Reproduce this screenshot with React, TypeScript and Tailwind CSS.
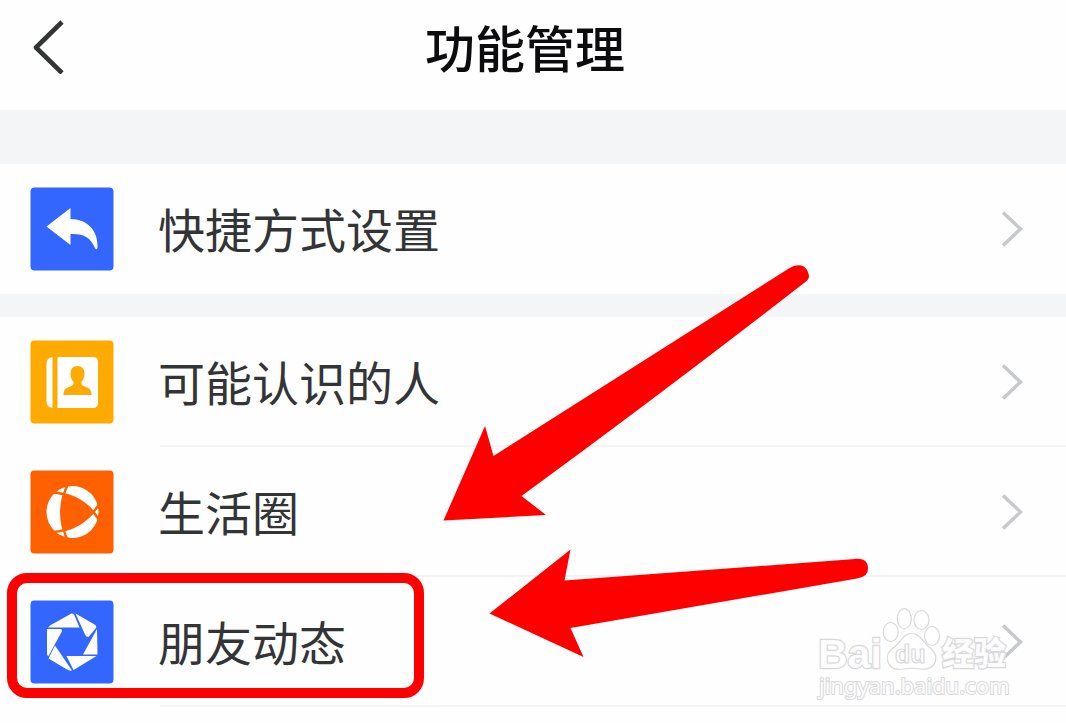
import type { ReactNode } from "react";

function BackIcon() {
  return (
    <svg width="34" height="54" viewBox="0 0 34 54" fill="none" aria-hidden="true">
      <path d="M30 2 L4 27.500 L30 53" stroke="#333436" strokeWidth="4.600" strokeLinejoin="round" />
    </svg>
  );
}

function Chevron() {
  return (
    <svg className="shrink-0" width="24" height="38" viewBox="0 0 24 38" fill="none" aria-hidden="true">
      <path d="M3 2.500 L20.500 19 L3 35.500" stroke="#c7c8cc" strokeWidth="3.400" />
    </svg>
  );
}

function Tile({ fill, children }: { fill: string; children: ReactNode }) {
  return (
    <svg className="shrink-0" width="84" height="84" viewBox="0 0 84 84" aria-hidden="true">
      <rect x="0.500" y="0.500" width="83" height="83" rx="4" fill={fill} />
      {children}
    </svg>
  );
}

const shortcutIcon = (
  <Tile fill="#3366ff">
    <path d="M16.500 39.500 L40.500 21 V32 C57 32 68 43 67.500 60 Q67 64 65 61 C60 50 54 46.500 40.500 47 V58 Z" fill="#fff" />
  </Tile>
);

const contactsIcon = (
  <Tile fill="#ffaa00">
    <path d="M22.500 17 V68 C18 67 16.500 65 16.500 61 V24 C16.500 20 18 18 22.500 17 Z" fill="#fff" />
    <path d="M27.500 17 H63 Q68 17 68 22 V63 Q68 68 63 68 H27.500 Z" fill="#fff" />
    <path d="M47.500 26 C52 26 54.500 29 54.500 33.500 C54.500 37 53.500 39.500 51.500 42 C51 45 53 46 56 47 C60 48.500 61.500 50 61.500 55 H33.500 C33.500 50 35 48.500 39 47 C42 46 44 45 43.500 42 C41.500 39.500 40.500 37 40.500 33.500 C40.500 29 43 26 47.500 26 Z" fill="#ffaa00" />
  </Tile>
);

const lifeIcon = (
  <Tile fill="#ff6000">
    <circle cx="42.500" cy="42" r="26" fill="#fff" />
    <path d="M34 24 C29.500 36 29.500 49 34 61 C46 58 56 52 62.500 42 C56 33 46 27 34 24 Z" fill="#ff6000" />
    <path d="M38 14 C29 32 29 53 38 71 M22 22.500 C41 23.500 58 32 70 51 M70 33 C58 52 41 61 22 62" fill="none" stroke="#ff6000" strokeWidth="2.400" />
  </Tile>
);

const momentsIcon = (
  <Tile fill="#3366ff">
    <g fill="#fff">
      <path d="M41.500 13.500 Q43.500 13 44.500 15.500 L49.500 27.500 H18 L20 25.500 Z" />
      <path d="M45.500 13.500 L64.500 24.500 Q67 26 66 28 L58.500 37 Q56 37 55 34.500 Z" />
      <path d="M67 29 L67.500 54.500 H53 Z" />
      <path d="M66.500 56 L43.500 70 L36.500 56 Z" />
      <path d="M25 45.500 L42 70.500 Q39 71 37 69.500 L18.500 58.500 Z" />
      <path d="M17 29 H31 Q33 30 31 33 L18.500 56 Q17 56 17 53 Z" />
    </g>
  </Tile>
);

function Row({ icon, label, divider }: { icon: ReactNode; label: string; divider?: boolean }) {
  return (
    <li className="relative">
      <a href="#" className="flex h-[130px] items-center pl-[30px] pr-[42px] text-[#333436]">
        {icon}
        <span className="ml-11 flex-1 pb-0.5 text-[47px] leading-[60px]">{label}</span>
        <Chevron />
      </a>
      {divider && <span className="absolute bottom-0 left-40 right-0 h-0.5 bg-[#f4f4f7]" />}
    </li>
  );
}

function Watermark() {
  return (
    <svg className="pointer-events-none absolute left-[812px] top-[600px]" width="204" height="104" viewBox="0 0 204 104" aria-label="Baidu 经验">
      <g fill="#fff" fillOpacity="0.9" stroke="#d9d9db" strokeWidth="1.200">
        <g strokeWidth="2.400" paintOrder="stroke" fontWeight="700">
          <text x="6" y="68" fontSize="41" fontFamily='"Liberation Sans", sans-serif'>Bai</text>
          <text x="130" y="65" fontSize="32" fontWeight="900" fontFamily='"Noto Sans CJK SC", sans-serif'>经验</text>
        </g>
        <ellipse cx="78.700" cy="32" rx="7.500" ry="9.500" />
        <ellipse cx="92.300" cy="18.700" rx="7" ry="10" />
        <ellipse cx="109.500" cy="20" rx="7.500" ry="9.500" />
        <ellipse cx="120" cy="36" rx="7.500" ry="9.500" />
        <path d="M99.500 33.500 C91 33.500 89 42 83 46.500 C76 51 74 57 76 62 C78 68 84 70 91 69 C97 68 103 68 109 69 C116 70 122 67 123.500 61 C125 54 121 50 116 46 C110 41 108 33.500 99.500 33.500 Z" />
        <text x="83" y="63" fontSize="25" fontWeight="700" fontFamily='"Liberation Sans", sans-serif'>du</text>
        <text x="7" y="94" fontSize="22" strokeWidth="2" paintOrder="stroke" fontFamily='"Noto Sans", sans-serif'>jingyan.baidu.com</text>
      </g>
    </svg>
  );
}

function Annotations() {
  return (
    <>
      <div className="pointer-events-none absolute left-[7px] top-[573px] h-[125px] w-[417px] rounded-[20px] border-[10px] border-[#ff0000]" />
      <svg className="pointer-events-none absolute left-[440px] top-[260px]" width="435" height="400" viewBox="440 260 435 400" fill="#ff0000" aria-hidden="true">
        <path d="M443.500 520.500 L485 426 L493.500 456 Q640 363 788 269 C798 263 804 265 807 270 C810 276 810 279 804 283 Q665 391 521.500 496 L546 515 Z" />
        <path d="M489.500 613.500 L570.500 549.500 L564.500 580.500 L855 559 C864 558 868 562 868 568 C868 574 865 577 857 578.500 L570.500 628 L583.500 657 Z" />
      </svg>
    </>
  );
}

export default function App() {
  return (
    <div className="relative min-h-screen overflow-hidden bg-[#fefefe] font-['Noto_Sans_CJK_SC',sans-serif]">
      <header className="grid h-[110px] grid-cols-[1fr_auto_1fr] items-center pb-4 pl-8">
        <button type="button" aria-label="返回" className="justify-self-start">
          <BackIcon />
        </button>
        <h1 className="pb-0.5 pr-12 text-[50px] font-medium leading-[64px] text-[#0c0c0e]">功能管理</h1>
      </header>
      <main className="bg-[#f4f5f7] pt-[54px]">
        <ul className="bg-[#fefefe]">
          <Row icon={shortcutIcon} label="快捷方式设置" />
        </ul>
        <ul className="mt-[23px] bg-[#fefefe] pb-4">
          <Row icon={contactsIcon} label="可能认识的人" divider />
          <Row icon={lifeIcon} label="生活圈" divider />
          <Row icon={momentsIcon} label="朋友动态" divider />
        </ul>
      </main>
      <Annotations />
      <Watermark />
    </div>
  );
}
